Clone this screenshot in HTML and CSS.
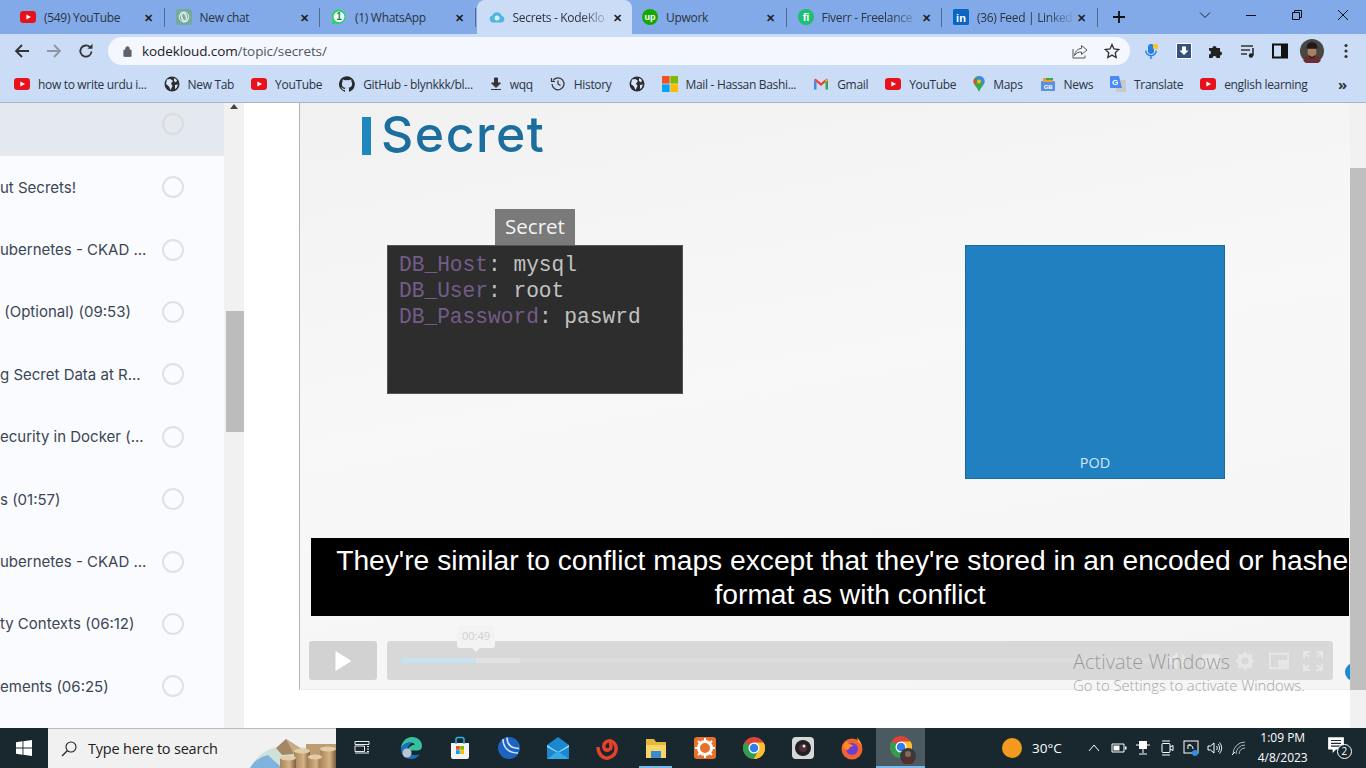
FILE: index.html
```html
<!DOCTYPE html>
<html>
<head>
<meta charset="utf-8">
<title>Secrets - KodeKloud</title>
<link rel="stylesheet" href="styles.css">
</head>
<body>
<svg class="defs" width="0" height="0">
  <symbol id="yt" viewBox="0 0 16 16"><rect y="2" width="16" height="12" rx="3.2" fill="#e8121c"/><path d="M6.4 5.4 11 8l-4.600 2.600z" fill="#fff"/></symbol>
  <symbol id="globe" viewBox="0 0 16 16"><circle cx="8" cy="8" r="7.500" fill="#2b2f33"/><path d="M3 3.500 6.500 3 9 5 7 7.500 8.500 10 6.500 14 5 10.500 2 8zM10 2l3 2-1 2.500-2-1.500zM11 9l3-.5-1.500 3.500-1.500 1z" fill="#dbe6f8"/></symbol>
  <symbol id="github" viewBox="0 0 16 16"><path fill="#24292e" d="M8 .2a8 8 0 0 0-2.500 15.600c.4.100.5-.2.500-.4v-1.400c-2.200.5-2.700-1-2.700-1-.4-.9-.9-1.200-.9-1.200-.7-.5.100-.5.100-.5.800.1 1.200.8 1.200.8.700 1.200 1.900.9 2.300.7.100-.5.300-.9.500-1.100-1.800-.2-3.600-.9-3.600-4 0-.9.300-1.600.8-2.100-.1-.2-.4-1 .1-2.100 0 0 .7-.2 2.200.8a7.600 7.600 0 0 1 4 0c1.500-1 2.200-.8 2.200-.8.400 1.100.2 1.900.1 2.100.5.600.8 1.300.8 2.100 0 3.100-1.900 3.700-3.700 3.900.3.300.6.800.6 1.500v2.200c0 .2.100.5.600.4A8 8 0 0 0 8 .2z"/></symbol>
  <symbol id="ms" viewBox="0 0 16 16"><rect width="7.600" height="7.600" fill="#f25022"/><rect x="8.400" width="7.600" height="7.600" fill="#7fba00"/><rect y="8.400" width="7.600" height="7.600" fill="#00a4ef"/><rect x="8.400" y="8.400" width="7.600" height="7.600" fill="#ffb900"/></symbol>
  <symbol id="chrome" viewBox="0 0 48 48"><circle cx="24" cy="24" r="22" fill="#db4437"/><path d="M24 46a22 22 0 0 0 19-33H24z" fill="#fbc02d"/><path d="M5 13a22 22 0 0 0 19 33l10-18z" fill="#2e9e4f"/><path d="M24 46 34 28l9-15a22 22 0 0 1-19 33z" fill="#fbc02d"/><circle cx="24" cy="24" r="11" fill="#fff"/><circle cx="24" cy="24" r="8.500" fill="#2f80ed"/></symbol>
  <linearGradient id="block" x1="0" x2="1" y1="0" y2="0"><stop offset="0" stop-color="#a98558"/><stop offset=".6" stop-color="#d3b285"/><stop offset="1" stop-color="#7d5f3c"/></linearGradient>
</svg>

<div class="tabstrip">
  <div class="tab">
    <svg class="fav"><use href="#yt"/></svg><span class="tab-title">(549) YouTube</span><span class="tab-x">✕</span>
  </div>
  <div class="tab">
    <svg class="fav" viewBox="0 0 16 16"><rect width="16" height="16" rx="3" fill="#74aa9c"/><g fill="none" stroke="#e6f2ee" stroke-width="1"><circle cx="8" cy="8" r="4.800"/><ellipse cx="8" cy="8" rx="2.200" ry="5"/><ellipse cx="8" cy="8" rx="5" ry="2.200" transform="rotate(60 8 8)"/></g></svg><span class="tab-title">New chat</span><span class="tab-x">✕</span>
  </div>
  <div class="tab">
    <svg class="fav" viewBox="0 0 16 16"><path d="M8 .5a7.300 7.300 0 0 0-6.200 11.200L.8 15.500l3.800-1A7.300 7.300 0 1 0 8 .5z" fill="#25d366"/><circle cx="8" cy="7.800" r="5.400" fill="#fff"/><text x="8" y="11.400" class="fav-num">1</text></svg><span class="tab-title">(1) WhatsApp</span><span class="tab-x">✕</span>
  </div>
  <div class="tab active">
    <svg class="fav" viewBox="0 0 16 16"><path d="M4 13.500a3.500 3.500 0 0 1-.6-6.900 4.800 4.800 0 0 1 9.200.2 3.400 3.400 0 0 1-.2 6.700z" fill="#4fb6df"/><circle cx="8" cy="9" r="2.500" fill="#d4eef8"/></svg><span class="tab-title fade">Secrets - KodeKlo</span><span class="tab-x">✕</span>
  </div>
  <div class="tab">
    <svg class="fav" viewBox="0 0 16 16"><circle cx="8" cy="8" r="8" fill="#14a800"/><text x="8" y="10.800" class="fav-up">up</text></svg><span class="tab-title">Upwork</span><span class="tab-x">✕</span>
  </div>
  <div class="tab">
    <svg class="fav" viewBox="0 0 16 16"><circle cx="8" cy="8" r="8" fill="#1dbf73"/><text x="8" y="12" class="fav-fi">fi</text></svg><span class="tab-title fade">Fiverr - Freelance</span><span class="tab-x">✕</span>
  </div>
  <div class="tab">
    <svg class="fav" viewBox="0 0 16 16"><rect width="16" height="16" rx="1.500" fill="#0a66c2"/><text x="8" y="12.600" class="fav-in">in</text></svg><span class="tab-title fade">(36) Feed | Linked</span><span class="tab-x">✕</span>
  </div>
  <svg class="new-tab" viewBox="0 0 14 14"><path d="M7 1v12M1 7h12" stroke="#111" stroke-width="1.800"/></svg>
  <div class="win-buttons">
    <svg viewBox="0 0 12 12"><path d="m1 3.500 5 5 5-5" fill="none" stroke="#222" stroke-width="1"/></svg>
    <svg viewBox="0 0 12 12"><path d="M1 6.500h10" stroke="#111" stroke-width="1"/></svg>
    <svg viewBox="0 0 12 12"><path d="M1.500 3.500h7v7h-7zM3.500 3.500v-2h7v7h-2" fill="none" stroke="#111" stroke-width="1"/></svg>
    <svg viewBox="0 0 12 12"><path d="m1 1 10 10M11 1 1 11" stroke="#111" stroke-width="1"/></svg>
  </div>
</div>

<div class="toolbar">
  <svg class="nav" viewBox="0 0 16 16"><path d="M15 8H2M8 2 2 8l6 6" fill="none" stroke="#333" stroke-width="1.800"/></svg>
  <svg class="nav" viewBox="0 0 16 16"><path d="M1 8h13M8 2l6 6-6 6" fill="none" stroke="#8c96a3" stroke-width="1.800"/></svg>
  <svg class="nav" viewBox="0 0 16 16"><path d="M13.500 8.500A5.600 5.600 0 1 1 11.800 4" fill="none" stroke="#333" stroke-width="1.800"/><path d="M9.500 5.800h5v-5z" fill="#333"/></svg>
  <div class="omnibox">
    <svg class="lock" viewBox="0 0 10 12"><path d="M1 5h8v7H1zM3 5V3.200a2 2 0 0 1 4 0V5" fill="#5f6368" stroke="#5f6368"/></svg>
    <span class="url">kodekloud.com<span class="url-path">/topic/secrets/</span></span>
    <svg class="omni-icon share" viewBox="0 0 16 16"><path d="M9.500 2.500 15 7l-5.500 4.500V9C6 9 4 10 2.500 12.500 3 8.500 5.500 5.800 9.500 5.300zM1 6v9h12v-2.500" fill="none" stroke="#555" stroke-width="1"/></svg>
    <svg class="omni-icon" viewBox="0 0 16 16"><path d="m8 1.500 2 4.500 4.800.5-3.600 3.200 1 4.800L8 12.100l-4.200 2.400 1-4.800L1.200 6.500 6 6z" fill="none" stroke="#333" stroke-width="1.300"/></svg>
  </div>
  <div class="ext">
    <svg viewBox="0 0 16 16"><rect x="5" y="1" width="6" height="10" rx="3" fill="#2a7de1"/><path d="M2.800 7.500a5.200 5.200 0 0 0 10.400 0M8 13v3" fill="none" stroke="#2a7de1" stroke-width="1.400"/><rect x="10" y="1" width="5" height="5" rx="1" fill="#f9c623"/></svg>
    <svg viewBox="0 0 16 16"><rect x=".5" y=".5" width="15" height="15" fill="#33527f" stroke="#fff"/><path d="M6 3.500h4v4h2.500L8 12 3.500 7.500H6z" fill="#fff"/></svg>
    <svg viewBox="0 0 16 16"><path d="M1 5h3.500a2 2 0 1 1 4 0H12v3.500a2 2 0 1 1 0 4V15H8.500a2 2 0 1 0-4 0H1v-3.500a2 2 0 1 0 0-4z" fill="#222"/></svg>
    <svg viewBox="0 0 16 16"><path d="M1 3h12M1 7h9M1 11h6" stroke="#333" stroke-width="1.500"/><path d="M13 5v7.500" stroke="#222" stroke-width="1.500"/><circle cx="11" cy="12.500" r="2.200" fill="#222"/></svg>
    <svg viewBox="0 0 16 16"><rect x="1" y="1.500" width="14" height="13" fill="none" stroke="#111" stroke-width="2"/><rect x="9" y="1.500" width="6" height="13" fill="#111"/></svg>
    <svg class="avatar" viewBox="0 0 22 22"><circle cx="11" cy="11" r="11" fill="#4a4640"/><path d="M6 8c0-4 3-5 5-5s5 1 5 5l-1 2H7z" fill="#1f1a18"/><path d="M7 9h8v4c0 3-2 4.500-4 4.500S7 16 7 13z" fill="#a88068"/><path d="M8 14c1 3 5 3 6 0l.5 3-3.500 2-3.500-2z" fill="#2a1e1a"/><path d="M3 20c1-3 3-4 5-4l3 2 3-2c3 0 4 1 5 4a11 11 0 0 1-16 0z" fill="#6b2f2f"/></svg>
    <svg class="dots" viewBox="0 0 4 16"><circle cx="2" cy="2.500" r="1.600" fill="#333"/><circle cx="2" cy="8" r="1.600" fill="#333"/><circle cx="2" cy="13.500" r="1.600" fill="#333"/></svg>
  </div>
</div>

<div class="bookmarks">
  <div class="bm"><svg><use href="#yt"/></svg>how to write urdu i...</div>
  <div class="bm"><svg><use href="#globe"/></svg>New Tab</div>
  <div class="bm"><svg><use href="#yt"/></svg>YouTube</div>
  <div class="bm"><svg><use href="#github"/></svg>GitHub - blynkkk/bl...</div>
  <div class="bm"><svg class="narrow" viewBox="0 0 12 16"><path d="M4.500 2h3v5h3L6 11.500 1.500 7h3zM1 13.500h10" fill="#333" stroke="#333"/></svg>wqq</div>
  <div class="bm"><svg viewBox="0 0 16 16"><path d="M3 4.500A6 6 0 1 1 2 8M1.500 2v3.500H5M8 4.500V8l2.500 1.500" fill="none" stroke="#333" stroke-width="1.200"/></svg>History</div>
  <div class="bm"><svg><use href="#globe"/></svg></div>
  <div class="bm"><svg><use href="#ms"/></svg>Mail - Hassan Bashi...</div>
  <div class="bm"><svg viewBox="0 0 16 16"><path d="M1 4v9.500h2.500V6.500z" fill="#4285f4"/><path d="M15 4v9.500h-2.500V6.500z" fill="#34a853"/><path d="M1 4 2.500 2.500 8 7l5.500-4.500L15 4 8 10z" fill="#ea4335"/><path d="M15 4l-2.500 2.500V3z" fill="#fbbc04"/></svg>Gmail</div>
  <div class="bm"><svg><use href="#yt"/></svg>YouTube</div>
  <div class="bm"><svg class="narrow" viewBox="0 0 12 16"><path d="M6 0a5.500 5.500 0 0 1 5.500 5.500C11.500 9 7.500 11.500 6 16 4.500 11.500.5 9 .5 5.500A5.500 5.500 0 0 1 6 0z" fill="#34a853"/><path d="M6 0a5.500 5.500 0 0 1 5.500 5.500c0 1-.3 1.800-.8 2.600L3 1.300A5.500 5.500 0 0 1 6 0z" fill="#4285f4"/><path d="M1.500 2.400 4 5 1.300 8.200C.8 7.400.5 6.500.5 5.500c0-1.200.4-2.300 1-3.100z" fill="#ea4335"/><circle cx="6" cy="5.500" r="2" fill="#fbbc04"/></svg>Maps</div>
  <div class="bm"><svg viewBox="0 0 16 16"><rect x="1" y="5" width="14" height="10" rx="1" fill="#5a8fe6"/><rect x="3" y="2" width="10" height="4" fill="#e8a13a"/><rect x="6" y="2" width="7" height="2" fill="#3aa757"/><text x="8" y="13" class="news-txt">GB</text></svg>News</div>
  <div class="bm"><svg viewBox="0 0 16 16"><rect x="6" y="4" width="10" height="12" rx="1" fill="#c9c9c9"/><path d="M1 0h8l3 12H1a1 1 0 0 1-1-1V1a1 1 0 0 1 1-1z" fill="#4a8af4"/><text x="5" y="9" class="tr-txt">G</text></svg>Translate</div>
  <div class="bm"><svg><use href="#yt"/></svg>english learning</div>
  <span class="more">»</span>
</div>

<main class="page">
  <aside class="lessons">
    <div class="lesson current"><span class="lesson-name"></span><i class="check"></i></div>
    <div class="lesson"><span class="lesson-name">ut Secrets!</span><i class="check"></i></div>
    <div class="lesson"><span class="lesson-name">ubernetes - CKAD ...</span><i class="check"></i></div>
    <div class="lesson"><span class="lesson-name">&nbsp;(Optional) (09:53)</span><i class="check"></i></div>
    <div class="lesson"><span class="lesson-name">g Secret Data at R...</span><i class="check"></i></div>
    <div class="lesson"><span class="lesson-name">ecurity in Docker (...</span><i class="check"></i></div>
    <div class="lesson"><span class="lesson-name">s (01:57)</span><i class="check"></i></div>
    <div class="lesson"><span class="lesson-name">ubernetes - CKAD ...</span><i class="check"></i></div>
    <div class="lesson"><span class="lesson-name">ty Contexts (06:12)</span><i class="check"></i></div>
    <div class="lesson"><span class="lesson-name">ements (06:25)</span><i class="check"></i></div>
  </aside>
  <div class="side-scroll">
    <svg class="side-arrow" viewBox="0 0 8 5"><path d="M4 0 8 5H0z" fill="#444"/></svg>
    <div class="side-thumb"></div>
  </div>
  <div class="content">
    <section class="video">
      <div class="slide-bar"></div>
      <h1 class="slide-title">Secret</h1>
      <div class="secret-tag">Secret</div>
      <pre class="secret-box"><span class="key">DB_Host</span>: mysql
<span class="key">DB_User</span>: root
<span class="key">DB_Password</span>: paswrd</pre>
      <div class="pod">POD</div>
      <div class="caption">They're similar to conflict maps except that they're stored in an encoded or hashed<br>format as with conflict</div>
      <div class="controls">
        <div class="play"><svg viewBox="0 0 16 20"><path d="M0 0 16 10 0 20z" fill="#fff"/></svg></div>
        <div class="bar">
          <div class="track"><div class="buffered"></div><div class="played"></div></div>
          <div class="ctl-icons">
            <svg viewBox="0 0 20 20"><path d="M1 7h4l5-5v16l-5-5H1zM13 6a6 6 0 0 1 0 8M15 3a9 9 0 0 1 0 14" fill="#e6e6e6" stroke="#e6e6e6"/></svg>
            <svg viewBox="0 0 24 20"><rect x="1" y="2" width="22" height="16" rx="2" fill="#e6e6e6"/></svg>
            <svg viewBox="0 0 20 20"><circle cx="10" cy="10" r="5.500" fill="none" stroke="#e6e6e6" stroke-width="4"/><path d="M10 1v4M10 15v4M1 10h4M15 10h4M3.600 3.600l3 3M13.400 13.400l3 3M3.600 16.400l3-3M13.400 6.600l3-3" stroke="#e6e6e6" stroke-width="3"/></svg>
            <svg viewBox="0 0 22 18"><path d="M1 1h20v16H1z" fill="none" stroke="#e6e6e6" stroke-width="2"/><rect x="10" y="8" width="11" height="9" fill="#e6e6e6"/></svg>
            <svg viewBox="0 0 20 20"><path d="M1 7V1h6M13 1h6v6M19 13v6h-6M7 19H1v-6M1 1l5 5M19 1l-5 5M19 19l-5-5M1 19l5-5" fill="none" stroke="#e6e6e6" stroke-width="2"/></svg>
          </div>
        </div>
      </div>
      <div class="time-tip">00:49</div>
      <div class="blue-dot"></div>
    </section>
  </div>
  <div class="page-scroll"><div class="page-thumb"></div></div>
  <div class="watermark">
    <div class="wm-big">Activate Windows</div>
    <div class="wm-small">Go to Settings to activate Windows.</div>
  </div>
</main>

<footer class="taskbar">
  <div class="start"><svg viewBox="0 0 16 16"><path d="M0 2.200 6.500 1.300v6.300H0zM7.400 1.200 16 0v7.600H7.400zM0 8.400h6.500v6.300L0 13.800zM7.400 8.400H16V16l-8.600-1.200z" fill="#fff"/></svg></div>
  <div class="search">
    <svg viewBox="0 0 16 16"><circle cx="10" cy="6" r="5" fill="none" stroke="#222" stroke-width="1.100"/><path d="M6.500 9.500 1 15" stroke="#222" stroke-width="1.300"/></svg>
    <span class="search-text">Type here to search</span>
    <svg class="search-art" viewBox="0 0 86 30"><path d="M0 30C6 18 18 9 34 8l52 4v18z" fill="#cfe2d8"/><path d="M0 30C4 23 10 19 18 17l14 13z" fill="#7fb2de"/><path d="M26 10 36 1l14 9-6 6-12 1z" fill="#a58863"/><path d="M36 1l14 9-6 6z" fill="#c8ab82"/><rect x="56" y="6" width="30" height="24" fill="#bd9c70"/><rect x="44" y="13" width="16" height="17" fill="url(#block)"/><rect x="30" y="20" width="16" height="10" fill="url(#block)"/><rect x="58" y="19" width="14" height="11" fill="url(#block)"/><rect x="70" y="11" width="16" height="19" fill="url(#block)"/><ellipse cx="52" cy="13" rx="8" ry="2.500" fill="#e3cda8"/><ellipse cx="38" cy="20" rx="8" ry="2.500" fill="#e3cda8"/><ellipse cx="65" cy="19" rx="7" ry="2.500" fill="#e3cda8"/><ellipse cx="78" cy="11" rx="8" ry="2.500" fill="#e3cda8"/></svg>
  </div>
  <div class="task-icons">
    <div class="task"><svg viewBox="0 0 16 16"><path d="M1 1.500h14v3H1zM1 13h14M1 11.500V6h9.500v5.500zM13 6.500h2M13 9h2M13 11.500h2" fill="none" stroke="#fff" stroke-width=".9"/></svg></div>
    <div class="task"><svg class="big" viewBox="0 0 24 24"><path d="M2 13C2 6 7 1 13 1c6 0 10 4 10 9 0 3-2 4.500-5 4.500H9c0-5 7-6 7-6C13 5 5 6 2 13z" fill="#35c1a0"/><path d="M2 13c0 6 4 10 10 10 4 0 7-2 9-5-3 1.500-8 2-11-1-3-3-1-8 3-10C8 6 3 9 2 13z" fill="#1a6fc4"/><circle cx="8" cy="17" r="4.500" fill="#bcc6cc"/></svg></div>
    <div class="task"><svg class="big" viewBox="0 0 24 24"><path d="M3 7h18v14a2 2 0 0 1-2 2H5a2 2 0 0 1-2-2z" fill="#f4f4f4"/><path d="M8 8V3.500a2 2 0 0 1 2-2h4a2 2 0 0 1 2 2V8" fill="none" stroke="#2fb0e8" stroke-width="1.500"/><rect x="8" y="10" width="3.800" height="3.800" fill="#f25022"/><rect x="12.200" y="10" width="3.800" height="3.800" fill="#7fba00"/><rect x="8" y="14.200" width="3.800" height="3.800" fill="#00a4ef"/><rect x="12.200" y="14.200" width="3.800" height="3.800" fill="#ffb900"/></svg></div>
    <div class="task"><svg class="big" viewBox="0 0 24 24"><circle cx="12" cy="12" r="11" fill="#1e63c0"/><path d="M6 3c0 8 5 14 15 14M10 1.500c0 7 4 11 12 11" fill="none" stroke="#dbeafe" stroke-width="1.500"/></svg></div>
    <div class="task"><svg class="big" viewBox="0 0 24 24"><path d="M1 9 12 1l11 8v14H1z" fill="#1c86d1"/><path d="M1 9l11 7 11-7v2l-11 6L1 11z" fill="#8fdcf5"/><path d="M1 23l11-8 11 8z" fill="#34a9e6"/></svg></div>
    <div class="task"><svg class="big" viewBox="0 0 24 24"><path d="M3 11c0 7 5 12 10 11 5-1 9-5 8-11-1-5-6-8-10-5s-2 9 2 8 4-6 1-6" fill="none" stroke="#e5402a" stroke-width="3.500"/></svg></div>
    <div class="task"><svg class="big" viewBox="0 0 24 24"><path d="M2 3h8l2 3h10v4H2z" fill="#e8b63a"/><path d="M2 9h20v13H2z" fill="#f8d568"/><rect x="7" y="15" width="10" height="7" fill="#3a8bd4"/></svg><b class="running"></b></div>
    <div class="task"><svg class="big" viewBox="0 0 24 24"><rect x="1" y="1" width="22" height="22" rx="3" fill="#e8702a"/><circle cx="12" cy="12" r="6.500" fill="none" stroke="#fff" stroke-width="3"/><path d="M12 2v4M12 18v4M2 12h4M18 12h4M5 5l3 3M16 16l3 3M5 19l3-3M16 8l3-3" stroke="#fff" stroke-width="2"/></svg></div>
    <div class="task"><svg class="big"><use href="#chrome"/></svg></div>
    <div class="task"><svg class="big" viewBox="0 0 24 24"><rect x="1" y="1" width="22" height="22" rx="4" fill="#d8d8d8"/><circle cx="12" cy="12" r="8" fill="#222"/><circle cx="12" cy="12" r="4" fill="#50303a"/><circle cx="13" cy="10" r="1.500" fill="#e8e8e8"/></svg></div>
    <div class="task"><svg class="big" viewBox="0 0 24 24"><circle cx="12" cy="13" r="10.500" fill="#f2632f"/><path d="M17 1c2 3 5 6 5 11 0-3-2-5-4-6z" fill="#ffb32c"/><circle cx="12" cy="13" r="6" fill="#6b3fd0"/><path d="M3 10c1-3 3-4 5-5-1 2 0 3 2 3l4 2c-3 0-4 1-6 4-3 0-5-2-5-4z" fill="#ff8a2c"/></svg></div>
    <div class="task active"><svg class="big"><use href="#chrome"/></svg><svg class="task-avatar" viewBox="0 0 16 16"><circle cx="8" cy="8" r="8" fill="#3a3a3a"/><circle cx="8" cy="6" r="3" fill="#8a6a55"/><path d="M2 14c1-4 3-5 6-5s5 1 6 5a8 8 0 0 1-12 0z" fill="#55302b"/></svg></div>
  </div>
  <div class="tray">
    <i class="sun"></i>
    <span class="temp">30°C</span>
    <svg class="chev" viewBox="0 0 12 8"><path d="m1 7 5-6 5 6" fill="none" stroke="#fff"/></svg>
    <svg viewBox="0 0 16 16"><path d="M1 4h12v8H1z" fill="none" stroke="#fff"/><rect x="2.500" y="5.500" width="6" height="5" fill="#fff"/><path d="M14 6.500h1.500v3H14z" fill="#fff"/></svg>
    <svg viewBox="0 0 16 16"><rect x="4" y="1" width="8" height="8" fill="#fff"/><path d="M1 5h3M12 5h3M8 9v4M4 14h8" stroke="#fff"/></svg>
    <svg viewBox="0 0 16 16"><rect x="3" y="3.500" width="8" height="9" rx="1" fill="none" stroke="#fff"/><path d="M11 7l3-1.500v5L11 9M3 1h8M3 15h8" fill="none" stroke="#fff"/></svg>
    <svg viewBox="0 0 16 16"><rect x="1" y="1" width="14" height="12" fill="none" stroke="#fff"/><path d="M5 9V5h3M6 5c2 0 4 1 4 4" fill="none" stroke="#fff"/><circle cx="12" cy="13" r="3" fill="#2f8de4"/></svg>
    <svg viewBox="0 0 16 16"><path d="M1 6h2.500L7 3v10L3.500 10H1z" fill="none" stroke="#fff"/><path d="M9.500 6a3 3 0 0 1 0 4M11 4a6 6 0 0 1 0 8M12.500 2.500a8 8 0 0 1 0 11" fill="none" stroke="#fff" stroke-width=".9"/></svg>
    <svg viewBox="0 0 16 16"><path d="M2 14A12 12 0 0 1 14 2M5 14a9 9 0 0 1 9-9M8 14a6 6 0 0 1 6-6" fill="none" stroke="#c3c9cc" stroke-width=".9"/><path d="M1 15l3-3" stroke="#fff"/></svg>
    <div class="clock"><div>1:09 PM</div><div>4/8/2023</div></div>
    <div class="notif">
      <svg viewBox="0 0 16 16"><path d="M1 1h14v11H8l-3 3v-3H1z" fill="#fff"/><path d="M3.500 4h9M3.500 6.500h9M3.500 9h9" stroke="#1b2a33"/></svg>
      <span class="notif-num">2</span>
    </div>
  </div>
</footer>
</body>
</html>
```

FILE: styles.css
```css
* { box-sizing: border-box; }
html, body { margin: 0; height: 768px; overflow: hidden; }
body { font-family: "Open Sans", "Noto Sans", sans-serif; display: flex; flex-direction: column; background: #fff; }
.defs { position: absolute; }

/* browser tabs */
.tabstrip { height: 34px; background: #82aae8; display: flex; align-items: stretch; padding-left: 8px; color: #2a3442; font-size: 12px; flex: none; }
.tab { width: 155.500px; display: flex; align-items: center; padding: 0 9px 0 12px; position: relative; }
.tab::after { content: ""; position: absolute; right: -1px; top: 8px; height: 19px; width: 1px; background: #55688a; }
.tab.active { background: #cbdcf6; border-radius: 8px 8px 0 0; margin: 0 -2px 0 2px; }
.tab.active::after { display: none; }
.fav { width: 16px; height: 16px; flex: none; margin-right: 8px; }
.tab-title { flex: 1; white-space: nowrap; overflow: hidden; letter-spacing: -0.3px; }
.tab-title.fade { -webkit-mask-image: linear-gradient(to right, #000 70%, transparent 100%); mask-image: linear-gradient(to right, #000 70%, transparent 100%); }
.tab-x { font-size: 11px; font-weight: 700; color: #222; width: 12px; text-align: center; flex: none; }
.fav-num { font: 700 10px "Liberation Sans", sans-serif; fill: #128c4a; text-anchor: middle; }
.fav-up { font: 700 9px "Liberation Sans", sans-serif; fill: #fff; text-anchor: middle; }
.fav-fi { font: 700 11px "Liberation Sans", sans-serif; fill: #fff; text-anchor: middle; }
.fav-in { font: 700 11px "Liberation Sans", sans-serif; fill: #fff; text-anchor: middle; }
.new-tab { width: 14px; height: 14px; align-self: center; margin-left: 15px; }
.win-buttons { margin-left: auto; display: flex; align-items: center; gap: 34px; padding: 0 17px 4px 0; }
.win-buttons svg { width: 12px; height: 12px; }

/* address bar */
.toolbar { height: 34px; background: #cbdcf6; display: flex; align-items: center; padding-left: 14px; flex: none; }
.nav { width: 16px; height: 16px; margin-right: 16px; flex: none; }
.omnibox { margin-left: -2px; width: 1022px; height: 28px; background: #f4f8fe; border-radius: 14px; display: flex; align-items: center; padding: 0 10px 0 15px; font-size: 13.500px; flex: none; }
.lock { width: 9px; height: 12px; margin-right: 10px; }
.url { color: #202124; letter-spacing: -0.1px; }
.url-path { color: #4f5660; }
.omni-icon { width: 16px; height: 16px; }
.share { margin-left: auto; margin-right: 16px; }
.ext { display: flex; align-items: center; margin-left: 13px; gap: 16px; }
.ext svg { width: 16px; height: 16px; flex: none; }
.ext svg:nth-child(2), .ext svg:nth-child(3), .ext svg:nth-child(4), .ext svg:nth-child(5) { transform: translateX(1px); }
.ext .avatar { width: 24px; height: 24px; margin-left: -3px; }
.ext .dots { width: 4px; height: 16px; margin-left: 4px; }

/* bookmarks */
.bookmarks { height: 35px; background: #cbdcf6; border-bottom: 1px solid #a9b4c4; display: flex; align-items: center; gap: 17px; padding: 0 14px 2px; font-size: 12px; color: #2a3442; flex: none; letter-spacing: -0.32px; }
.bm { display: flex; align-items: center; gap: 8px; white-space: nowrap; }
.bm svg { width: 16px; height: 16px; flex: none; }
.bm svg.narrow { width: 12px; }
.more { margin-left: auto; font-weight: 700; font-size: 15px; line-height: 1; margin-right: 5px; }
.news-txt { font: 700 6px "Liberation Sans", sans-serif; fill: #fff; text-anchor: middle; }
.tr-txt { font: 700 8px "Liberation Sans", sans-serif; fill: #fff; text-anchor: middle; }

/* page */
.page { flex: 1; display: flex; position: relative; min-height: 0; overflow: hidden; }
.lessons { width: 224px; background: #f9fbfe; flex: none; display: flex; flex-direction: column; }
.lesson { height: 62.400px; flex: none; display: flex; align-items: center; justify-content: space-between; padding-right: 40px; font-family: Inter, sans-serif; font-size: 15px; color: #3c4654; white-space: nowrap; }
.lesson.current { height: 53px; background: #e4e8ef; padding-bottom: 11px; }
.check { width: 22px; height: 22px; border: 2px solid #dfe1e4; border-radius: 50%; flex: none; }
.lesson.current .check { border-color: #d9dce0; }
.side-scroll { width: 20px; background: #f1f1f1; flex: none; display: flex; flex-direction: column; align-items: center; padding: 0 0 0 2px; }
.side-arrow { width: 8px; height: 5px; margin-top: 1px; margin-right: 2px; }
.side-thumb { width: 18px; height: 121px; background: #bcbcbc; margin-top: 202px; }
.content { flex: 1; padding-left: 55px; min-width: 0; }
.page-scroll { width: 16px; background: #f1f1f1; flex: none; }
.page-thumb { height: 522px; margin-top: 65px; background: #bfbfbf; }

/* video frame, the slide is a free canvas */
.video { height: 587px; position: relative; overflow: hidden; background: linear-gradient(170deg, #f1f1f1 0%, #f8f8f8 45%, #f5f5f5 100%); border-left: 1px solid #b4b4b4; border-bottom: 1px solid #ececec; }
.slide-bar { position: absolute; left: 62px; top: 14px; width: 9px; height: 38px; background: #1e87c0; }
.slide-title { position: absolute; left: 81px; top: 1px; margin: 0; font: 500 50px/60px Inter, sans-serif; letter-spacing: 1.500px; color: #1b6e9e; }
.secret-tag { position: absolute; left: 195px; top: 106px; width: 80px; height: 36px; background: #7a7a7a; color: #f4f4f4; font: 20.500px/35px "Open Sans", sans-serif; text-align: center; }
.secret-box { position: absolute; left: 87px; top: 142px; width: 296px; height: 149px; margin: 0; padding: 7px 11px; background: #2d2d2d; border: 1px solid #555; color: #c2c2c2; font: 21.200px/25.800px "Liberation Mono", monospace; }
.key { color: #745c88; }
.pod { position: absolute; left: 665px; top: 142px; width: 260px; height: 234px; background: #2080c0; border: 1px solid #1b6a9f; color: #cfe8f7; font-size: 14.500px; text-align: center; display: flex; align-items: flex-end; justify-content: center; padding-bottom: 6px; }
.caption { position: absolute; left: 11px; top: 435px; width: 1078px; height: 78px; background: #000; color: #fff; font: 28.200px/34px "Liberation Sans", sans-serif; text-align: center; padding-top: 5px; white-space: nowrap; clip-path: inset(0 40px 0 0); }
.controls { position: absolute; left: 9px; top: 538px; width: 1024px; height: 39px; display: flex; gap: 10px; }
.play { width: 68px; background: #d2d2d2; border-radius: 3px; display: flex; align-items: center; justify-content: center; }
.play svg { width: 17px; height: 20px; }
.bar { flex: 1; background: #d8d8d8; border-radius: 3px; display: flex; align-items: center; padding: 0 10px 0 14px; gap: 10px; }
.track { flex: 1; height: 5px; position: relative; background: #dcdcdc; }
.buffered { width: 119px; height: 5px; background: #e2e2e2; }
.played { position: absolute; left: 0; top: 0; width: 75px; height: 5px; background: #c8e3ef; }
.ctl-icons { display: flex; gap: 14px; align-items: center; }
.ctl-icons svg { width: 20px; height: 20px; }
.time-tip { position: absolute; left: 157px; top: 522px; width: 38px; height: 23px; background: #f3f3f3; border-radius: 3px; color: #d0d0d0; font-size: 11px; line-height: 22px; text-align: center; }
.time-tip::after { content: ""; position: absolute; left: 15px; top: 23px; border: 4px solid transparent; border-top-color: #f3f3f3; border-bottom: 0; }
.blue-dot { position: absolute; left: 1045px; top: 560px; width: 18px; height: 18px; background: #1b8ad0; border-radius: 50%; }

.watermark { position: absolute; left: 1073px; top: 546px; color: rgba(125, 125, 125, 0.7); }
.wm-big { font-size: 20px; line-height: 26px; font-weight: 300; }
.wm-small { font-size: 14.800px; line-height: 20px; font-weight: 300; letter-spacing: -0.05px; }

/* windows taskbar */
.taskbar { height: 40px; background: #19282f; display: flex; align-items: stretch; flex: none; color: #fff; }
.start { width: 48px; display: flex; align-items: center; justify-content: center; }
.start svg { width: 16px; height: 16px; }
.search { width: 288px; background: #f1f1f1; border-top: 1px solid #bbb; display: flex; align-items: center; padding-left: 13px; color: #222; font-size: 14.500px; position: relative; overflow: hidden; }
.search > svg:first-child { width: 16px; height: 16px; margin-right: 11px; }
.search-text { letter-spacing: -0.2px; }
.search-art { position: absolute; right: 0; bottom: 0; width: 86px; height: 30px; }
.task-icons { display: flex; margin-left: 1px; }
.task { width: 49px; display: flex; align-items: center; justify-content: center; position: relative; }
.task svg { width: 16px; height: 16px; }
.task svg.big { width: 24px; height: 24px; }
.task.active { background: #4a5a60; border-bottom: 2px solid #76b9ed; }
.running { position: absolute; left: 8px; right: 8px; bottom: 0; height: 2px; background: #76b9ed; }
.task .task-avatar { position: absolute; left: 24px; top: 20px; width: 16px; height: 16px; }
.tray { flex: 1; display: flex; align-items: center; padding-left: 77px; gap: 8px; }
.tray svg { width: 16px; height: 16px; flex: none; }
.sun { width: 20px; height: 20px; background: #f39a1e; border-radius: 50%; }
.temp { font-size: 13.500px; margin: 0 18px 0 2px; }
.tray .chev { width: 12px; height: 8px; margin-right: 3px; }
.clock { font-size: 12px; line-height: 20px; text-align: center; width: 52px; margin-left: 2px; }
.notif { position: relative; margin-left: 10px; width: 24px; height: 24px; }
.notif svg { width: 18px; height: 18px; }
.notif-num { position: absolute; left: 10px; top: 8px; width: 15px; height: 15px; border-radius: 50%; background: #19282f; border: 1px solid #fff; font-size: 10px; line-height: 13px; text-align: center; }
```
